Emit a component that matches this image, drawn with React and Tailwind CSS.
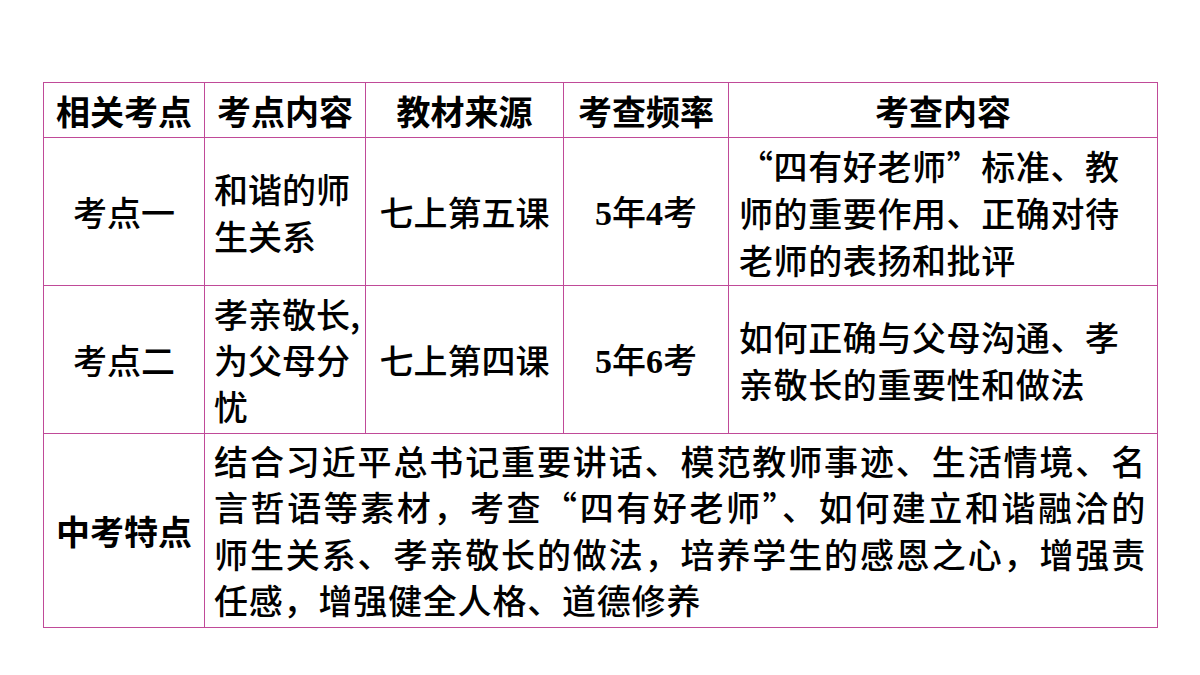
// Exam points table slide
const border = 'border border-[#c04a98]'

function Cell({ children, className = '', ...rest }) {
  return (
    <td className={`${border} align-middle ${className}`} {...rest}>
      {children}
    </td>
  )
}

function Line({ children, last }) {
  return (
    <div className={last ? '' : '[text-align-last:justify] text-justify'}>{children}</div>
  )
}

const serif = { fontFamily: '"Liberation Serif", serif' }

export default function App() {
  return (
    <div
      className="w-[1200px] h-[675px] bg-white overflow-hidden pt-[82px] pl-[43px] text-black"
      style={{ fontFamily: '"Noto Sans CJK SC", "Noto Sans", sans-serif' }}
    >
      <table className="border-collapse table-fixed w-[1114px] text-[34px] leading-[47px] font-medium">
        <colgroup>
          <col className="w-[161px]" />
          <col className="w-[161px]" />
          <col className="w-[198px]" />
          <col className="w-[165px]" />
          <col className="w-[429px]" />
        </colgroup>
        <thead>
          <tr className="h-[55px] font-bold">
            <Cell className="text-center">相关考点</Cell>
            <Cell className="text-center">考点内容</Cell>
            <Cell className="text-center">教材来源</Cell>
            <Cell className="text-center">考查频率</Cell>
            <Cell className="text-center">考查内容</Cell>
          </tr>
        </thead>
        <tbody>
          <tr className="h-[148px]">
            <Cell className="text-center">考点一</Cell>
            <Cell className="pl-[9px] pr-1">
              和谐的师<br />生关系
            </Cell>
            <Cell className="text-center">七上第五课</Cell>
            <Cell className="text-center">
              <span className="font-bold" style={serif}>5</span>年
              <span className="font-bold" style={serif}>4</span>考
            </Cell>
            <Cell className="pl-[10px] pr-2 tracking-[0.6px] pt-[2px]">
              “四有好老师”标准、教<br />
              师的重要作用、正确对待<br />
              老师的表扬和批评
            </Cell>
          </tr>
          <tr className="h-[148px]">
            <Cell className="text-center">考点二</Cell>
            <Cell className="pl-[9px] pr-1 leading-[46px]">
              孝亲敬长,<br />为父母分<br />忧
            </Cell>
            <Cell className="text-center">七上第四课</Cell>
            <Cell className="text-center">
              <span className="font-bold" style={serif}>5</span>年
              <span className="font-bold" style={serif}>6</span>考
            </Cell>
            <Cell className="pl-[10px] pr-2 tracking-[0.6px]">
              如何正确与父母沟通、孝<br />
              亲敬长的重要性和做法
            </Cell>
          </tr>
          <tr className="h-[194px]">
            <Cell className="text-center font-bold">中考特点</Cell>
            <Cell colSpan={4} className="pl-[9px] pr-[11px] tracking-[0.8px] leading-[46.5px]">
              <Line>结合习近平总书记重要讲话、模范教师事迹、生活情境、名</Line>
              <Line>言哲语等素材，考查“四有好老师”、如何建立和谐融洽的</Line>
              <Line>师生关系、孝亲敬长的做法，培养学生的感恩之心，增强责</Line>
              <Line last>任感，增强健全人格、道德修养</Line>
            </Cell>
          </tr>
        </tbody>
      </table>
    </div>
  )
}
